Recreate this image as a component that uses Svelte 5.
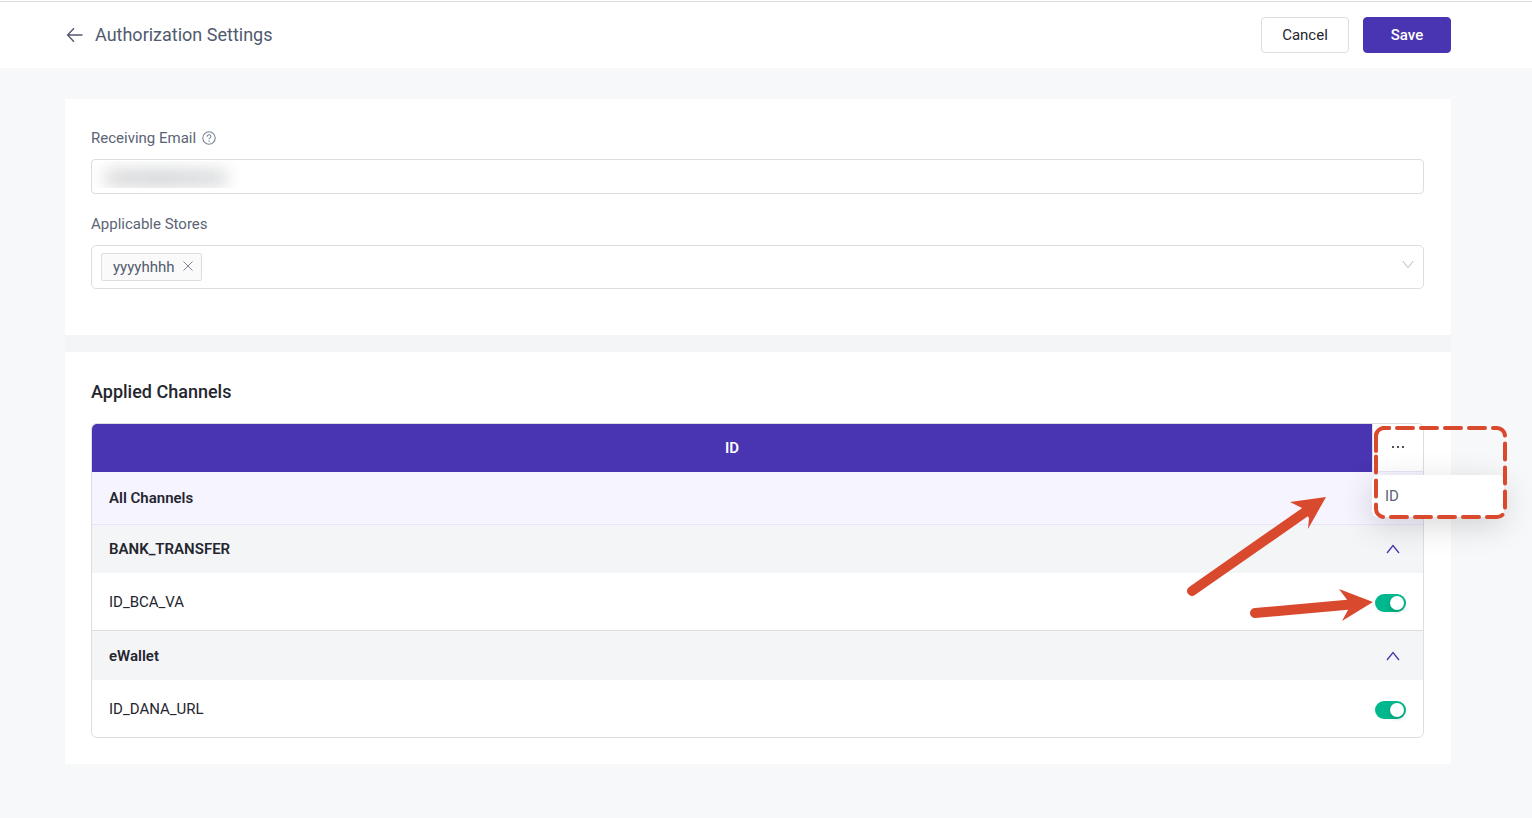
<script>
  let email = $state('');
  let stores = $state(['yyyyhhhh']);
  let menuOpen = $state(true);
  const regions = ['ID'];

  let groups = $state([
    { name: 'BANK_TRANSFER', open: true, channels: [{ name: 'ID_BCA_VA', on: true }] },
    { name: 'eWallet', open: true, channels: [{ name: 'ID_DANA_URL', on: true }] }
  ]);

  function removeStore(store) {
    stores = stores.filter((s) => s !== store);
  }
</script>

<header class="topbar">
  <a href="#back" class="back" aria-label="Back">
    <svg width="17" height="16" viewBox="0 0 17 16" fill="none" stroke="currentColor" stroke-width="1.4">
      <path d="M8 1.2 1.6 8 8 14.8M1.6 8H16.5" />
    </svg>
  </a>
  <h1>Authorization Settings</h1>
  <div class="actions">
    <button type="button" class="btn">Cancel</button>
    <button type="submit" form="settings" class="btn primary">Save</button>
  </div>
</header>

<main>
  <form id="settings" class="card form" onsubmit={(e) => e.preventDefault()}>
    <div class="label-row">
      <label for="email">Receiving Email</label>
      <svg class="help" width="14" height="14" viewBox="0 0 14 14" fill="none" stroke="currentColor">
        <circle cx="7" cy="7" r="6.2" stroke-width="1.1" />
        <path d="M5.1 5.7C5.1 4.5 5.9 3.8 7 3.8s1.9.7 1.9 1.7c0 1.3-1.9 1.4-1.9 2.8" stroke-width="1.1" />
        <circle cx="7" cy="10" r=".7" fill="currentColor" stroke="none" />
      </svg>
    </div>
    <div class="email-field">
      <input id="email" type="email" bind:value={email} />
      <span class="masked"></span>
    </div>

    <div class="label-row">
      <label for="stores">Applicable Stores</label>
    </div>
    <div class="select-field">
      {#each stores as store}
        <span class="tag">
          {store}
          <button type="button" aria-label="Remove {store}" onclick={() => removeStore(store)}>
            <svg width="10" height="10" viewBox="0 0 10 10" fill="none" stroke="currentColor">
              <path d="M.5.5l9 9M9.5.5l-9 9" />
            </svg>
          </button>
        </span>
      {/each}
      <select id="stores"><option value=""></option></select>
      <svg class="caret" width="12" height="9" viewBox="0 0 12 9" fill="none" stroke="currentColor">
        <path d="M.8 1 6 7.8 11.2 1" />
      </svg>
    </div>
  </form>

  <section class="card">
    <h2>Applied Channels</h2>
    <div class="table-wrap">
      <table>
        <thead>
          <tr>
            <th class="region" scope="col">ID</th>
            <th class="more" scope="col">
              <button type="button" aria-label="More regions" onclick={() => (menuOpen = !menuOpen)}>
                <svg width="14" height="4" viewBox="0 0 14 4" fill="currentColor">
                  <circle cx="2" cy="2" r="1.1" /><circle cx="7" cy="2" r="1.1" /><circle cx="12" cy="2" r="1.1" />
                </svg>
              </button>
              {#if menuOpen}
                <ul class="menu">
                  {#each regions as region}
                    <li><button type="button">{region}</button></li>
                  {/each}
                </ul>
              {/if}
            </th>
          </tr>
        </thead>
        <tbody>
          <tr class="all"><th colspan="2" scope="colgroup">All Channels</th></tr>
        </tbody>
        {#each groups as group}
          <tbody>
            <tr class="group">
              <th scope="rowgroup">{group.name}</th>
              <td>
                <button
                  type="button"
                  class="fold"
                  class:closed={!group.open}
                  aria-label="Toggle {group.name}"
                  onclick={() => (group.open = !group.open)}
                >
                  <svg width="14" height="10" viewBox="0 0 14 10" fill="none" stroke="currentColor" stroke-width="1.3">
                    <path d="M1 9 7 1.6 13 9" />
                  </svg>
                </button>
              </td>
            </tr>
            {#if group.open}
              {#each group.channels as channel}
                <tr class="channel">
                  <td><label for={channel.name}>{channel.name}</label></td>
                  <td><input id={channel.name} type="checkbox" role="switch" class="switch" bind:checked={channel.on} /></td>
                </tr>
              {/each}
            {/if}
          </tbody>
        {/each}
      </table>

      <!-- guide marks over the region menu and the first switch -->
      <svg class="guide" width="340" height="210" viewBox="0 0 340 210" fill="none">
        <rect x="192" y="5" width="129" height="89" rx="8" stroke-width="4" stroke-linecap="round" stroke-dasharray="16 8" stroke-dashoffset="-13" />
        <path d="M192 28V13A8 8 0 0 1 200 5H205" stroke-width="4" stroke-linecap="round" />
        <path d="M8 168 127 85" stroke-width="10" stroke-linecap="round" />
        <path class="tip" d="M142 74 106 79 118 85 125 95 124 106Z" />
        <path d="M71 190 172 181" stroke-width="10" stroke-linecap="round" />
        <path class="tip" d="M189 179 155 166 164 178 165 185 158 198Z" />
      </svg>
    </div>
  </section>
</main>

<style>
  :global(body) {
    margin: 0;
    background: #f6f8fa;
    font-family: Roboto, 'Liberation Sans', sans-serif;
    font-size: 15px;
    color: #24262f;
  }

  button,
  input,
  select {
    font: inherit;
    color: inherit;
  }

  button {
    cursor: pointer;
  }

  svg {
    display: block;
  }

  /* top bar */
  .topbar {
    display: flex;
    align-items: center;
    height: 66px;
    margin-top: 1px;
    padding: 0 81px 0 66px;
    background: #fff;
    border-top: 1px solid #dcdee2;
    box-shadow: 0 -1px #fff;
  }

  .back {
    color: #515a6e;
  }

  h1 {
    margin: 0 0 0 12px;
    font-size: 18px;
    font-weight: 400;
    line-height: 22px;
    color: #515a6e;
  }

  .actions {
    display: flex;
    gap: 14px;
    margin-left: auto;
  }

  .btn {
    width: 88px;
    height: 36px;
    padding: 0;
    background: #fff;
    border: 1px solid #dcdee2;
    border-radius: 4px;
  }

  .btn.primary {
    background: #4934b1;
    border-color: #4934b1;
    color: #fff;
    font-weight: 500;
  }

  /* cards */
  main {
    display: flex;
    flex-direction: column;
    margin: 31px 81px 54px 65px;
    gap: 17px;
    background: #f4f5f7;
  }

  .card {
    padding: 26px 27px 26px 26px;
    background: #fff;
  }

  .form {
    padding-bottom: 46px;
  }

  .label-row {
    display: flex;
    align-items: center;
    gap: 6px;
    height: 26px;
    margin-bottom: 8px;
    color: #5a6475;
  }

  .help {
    color: #7d8695;
  }

  .email-field {
    position: relative;
    margin-bottom: 17px;
  }

  .email-field input {
    box-sizing: border-box;
    display: block;
    width: 100%;
    height: 35px;
    padding: 0 12px;
    border: 1px solid #dcdee2;
    border-radius: 4px;
  }

  .masked {
    position: absolute;
    top: 2px;
    left: 2px;
    width: 178px;
    height: 27px;
    border-radius: 8px;
    overflow: hidden;
    pointer-events: none;
  }

  .masked::before {
    content: '';
    display: block;
    width: 122px;
    height: 18px;
    margin: 8px 0 0 12px;
    background: linear-gradient(90deg, #dcdcdd, #d3d5d8 45%, #dedfe0);
    filter: blur(8px);
  }

  .select-field {
    display: flex;
    align-items: center;
    height: 42px;
    padding: 0 9px;
    border: 1px solid #dcdee2;
    border-radius: 5px;
  }

  .select-field select {
    flex: 1;
    height: 100%;
    margin-right: 8px;
    background: none;
    border: 0;
    appearance: none;
  }

  .tag {
    display: flex;
    align-items: center;
    gap: 9px;
    height: 26px;
    padding: 0 8px 0 11px;
    background: #fafafa;
    border: 1px solid #dcdee2;
    border-radius: 2px;
    color: #515a6e;
  }

  .tag button {
    padding: 0 0 2px;
    background: none;
    border: 0;
    color: #808695;
  }

  .caret {
    margin-bottom: 6px;
    color: #b4b8be;
  }

  /* channels */
  h2 {
    margin: 0 0 18px;
    font-size: 18px;
    font-weight: 500;
    line-height: 27px;
  }

  .table-wrap {
    position: relative;
  }

  table {
    width: 100%;
    border: 1px solid #dcdee2;
    border-radius: 6px;
    border-spacing: 0;
  }

  th,
  td {
    padding: 0 17px;
    font-weight: 400;
    text-align: left;
  }

  th {
    font-weight: 600;
  }

  .region {
    height: 48px;
    background: #4934b1;
    border-radius: 5px 0 0 0;
    color: #fff;
    text-align: center;
  }

  .more {
    position: relative;
    width: 50px;
    padding: 0;
    border-left: 1px solid #dcdee2;
    border-bottom: 1px solid #e8e5fb;
  }

  .more > button {
    display: grid;
    place-items: center;
    width: 100%;
    height: 46px;
    padding: 0 0 2px;
    background: none;
    border: 0;
  }

  .menu {
    position: absolute;
    z-index: 1;
    top: 51px;
    left: -1px;
    width: 132px;
    margin: 0;
    padding: 4px 0;
    background: #fff;
    border-radius: 6px;
    box-shadow: 0 8px 32px rgba(0, 0, 0, 0.16);
    list-style: none;
  }

  .menu button {
    width: 100%;
    height: 34px;
    padding: 0 13px;
    background: none;
    border: 0;
    color: #5a6475;
    font-weight: 400;
    text-align: left;
  }

  .all th {
    height: 52px;
    background: #f6f4ff;
    border-bottom: 1px solid #e8e5fb;
  }

  .group th,
  .group td {
    height: 48px;
    background: #f4f5f7;
  }

  tbody + tbody + tbody .group > * {
    height: 49px;
    border-top: 1px solid #dcdee2;
  }

  .group td,
  .channel td:last-child {
    padding: 0;
  }

  .channel td {
    height: 57px;
  }

  .fold {
    display: block;
    margin: 0 auto 0 14px;
    padding: 0;
    background: none;
    border: 0;
    color: #4934b1;
  }

  .fold.closed {
    transform: rotate(180deg);
  }

  .switch {
    display: block;
    box-sizing: border-box;
    width: 31px;
    height: 18px;
    margin: 2px 0 0 3px;
    padding: 2px;
    background: #b8bcc4;
    border-radius: 9px;
    appearance: none;
  }

  .switch::before {
    content: '';
    display: block;
    width: 14px;
    height: 14px;
    border-radius: 50%;
    background: #fff;
    box-shadow: 0 2px 4px rgba(0, 35, 11, 0.2);
  }

  .switch:checked {
    background: #00b88d;
  }

  .switch:checked::before {
    margin-left: 13px;
  }

  .guide {
    position: absolute;
    z-index: 2;
    top: 0;
    right: -100px;
    pointer-events: none;
    stroke: #d9492e;
  }

  .guide .tip {
    fill: #d9492e;
    stroke: none;
  }
</style>
